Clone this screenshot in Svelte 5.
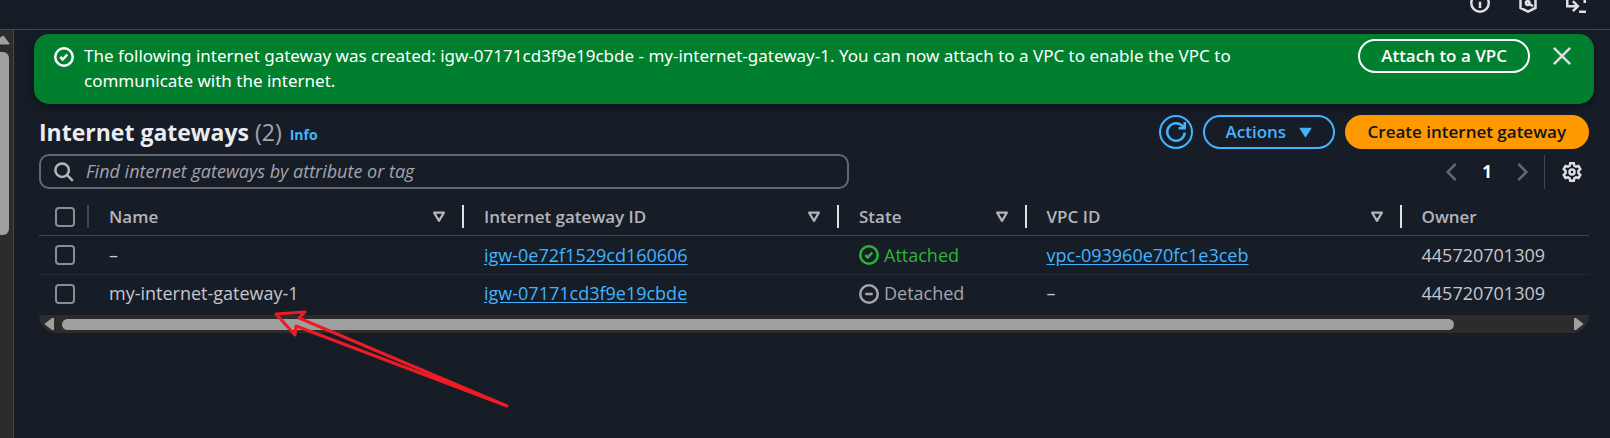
<script>
  const rows = [
    { name: '–', id: 'igw-0e72f1529cd160606', state: 'Attached', vpc: 'vpc-093960e70fc1e3ceb', owner: '445720701309' },
    { name: 'my-internet-gateway-1', id: 'igw-07171cd3f9e19cbde', state: 'Detached', vpc: '', owner: '445720701309' }
  ];
  const columns = [
    { label: 'Name', sortable: true },
    { label: 'Internet gateway ID', sortable: true },
    { label: 'State', sortable: true },
    { label: 'VPC ID', sortable: true },
    { label: 'Owner', sortable: false }
  ];
</script>

{#snippet checkCircle()}
  <svg class="icon" viewBox="0 0 16 16" aria-hidden="true">
    <circle cx="8" cy="8" r="7" />
    <path d="m5 8 2 2 3.6-4" />
  </svg>
{/snippet}

<div class="page">
  <header class="topbar">
    <button aria-label="Info panel">
      <svg class="icon" viewBox="0 0 16 16"><circle cx="8" cy="8" r="7" /><path d="M8 7v5M8 4v1.6" /></svg>
    </button>
    <button aria-label="Tools">
      <svg class="icon" viewBox="0 0 16 16"><path d="M8 1.100 14 4v8l-6 2.900L2 12V4zM8 8l4 2.600" /><circle cx="7.800" cy="8" r="1.500" /></svg>
    </button>
    <button aria-label="CloudShell">
      <svg class="icon" viewBox="0 0 16 16"><path d="M1 2v8.500h8M5.500 6.500l4 4-4 4M10.500 15H16M15 2v6" /></svg>
    </button>
  </header>

  <div class="body">
    <div class="vscroll" aria-hidden="true">
      <svg viewBox="0 0 10 10"><path d="M3.5.5 9.5 8.5a.9.9 0 0 1-.6 1H-1V3z" /></svg>
      <div class="vthumb"></div>
    </div>

    <main>
      <section class="alert">
        {@render checkCircle()}
        <p>The following internet gateway was created: igw-07171cd3f9e19cbde - my-internet-gateway-1. You can now attach to a VPC to enable the VPC to communicate with the internet.</p>
        <button class="btn attach">Attach to a VPC</button>
        <button class="close" aria-label="Dismiss">
          <svg class="icon" viewBox="0 0 16 16"><path d="m1.5 1.5 13 13m0-13-13 13" /></svg>
        </button>
      </section>

      <section class="panel">
        <div class="heading">
          <h1>Internet gateways <span>(2)</span></h1>
          <a class="info" href="#info">Info</a>
          <div class="actions">
            <button class="btn refresh" aria-label="Refresh">
              <svg class="icon" viewBox="0 0 16 16"><path d="M15 8.500A7 7 0 1 1 12.500 2.600L15 5M15 0v5h-5" /></svg>
            </button>
            <button class="btn">Actions <svg class="caret" viewBox="0 0 12 10" aria-hidden="true"><path d="M1 1h10L6 9z" /></svg></button>
            <button class="btn primary">Create internet gateway</button>
          </div>
        </div>

        <div class="tools">
          <label class="search">
            <svg class="icon" viewBox="0 0 16 16" aria-hidden="true"><circle cx="6.5" cy="6.5" r="5.4" /><path d="m10.5 10.5 4.6 4.6" /></svg>
            <input type="text" aria-label="Find internet gateways" placeholder="Find internet gateways by attribute or tag" />
          </label>
          <nav class="pager" aria-label="Pages">
            <button class="dim" aria-label="Previous page"><svg class="icon" viewBox="0 0 16 16"><path d="M11 1.5 4.5 8l6.500 6.500" /></svg></button>
            <button class="current">1</button>
            <button class="dim" aria-label="Next page"><svg class="icon" viewBox="0 0 16 16"><path d="M5 1.500 11.500 8 5 14.500" /></svg></button>
          </nav>
          <button class="settings" aria-label="Preferences">
            <svg class="icon" viewBox="0 0 16 16"><path d="M6.600 1h2.800l.5 2 1.300.800 2-.6 1.400 2.500L13.100 7.200v1.600l1.500 1.500-1.400 2.500-2-.6-1.300.8-.5 2H6.600l-.5-2-1.300-.8-2 .6-1.400-2.500 1.500-1.500V7.200L1.400 5.700l1.400-2.500 2 .6 1.300-.8z" /><circle cx="8" cy="8" r="2" /></svg>
          </button>
        </div>

        <table>
          <colgroup>
            <col class="c-check" /><col class="c-wide" /><col class="c-wide" /><col class="c-slim" /><col class="c-wide" /><col class="c-slim" />
          </colgroup>
          <thead>
            <tr>
              <th class="check"><input type="checkbox" aria-label="Select all" /></th>
              {#each columns as col}
                <th>
                  <div class="th">
                    {col.label}
                    {#if col.sortable}
                      <svg class="sort" viewBox="0 0 12 11" aria-hidden="true"><path d="M1.500 1.500h9L6 9z" /></svg>
                    {/if}
                  </div>
                </th>
              {/each}
            </tr>
          </thead>
          <tbody>
            {#each rows as row}
              <tr>
                <td class="check"><input type="checkbox" aria-label="Select {row.id}" /></td>
                <td>{row.name}</td>
                <td><a href="#{row.id}">{row.id}</a></td>
                <td>
                  <span class="state" class:ok={row.state === 'Attached'}>
                    {#if row.state === 'Attached'}
                      {@render checkCircle()}
                    {:else}
                      <svg class="icon" viewBox="0 0 16 16" aria-hidden="true"><circle cx="8" cy="8" r="7" /><path d="M5 8h6" /></svg>
                    {/if}
                    {row.state}
                  </span>
                </td>
                <td>{#if row.vpc}<a href="#{row.vpc}">{row.vpc}</a>{:else}–{/if}</td>
                <td>{row.owner}</td>
              </tr>
            {/each}
          </tbody>
        </table>

        <div class="hscroll" aria-hidden="true">
          <svg viewBox="0 0 10 12"><path d="M9 0v12H7L.6 7a1 1 0 0 1 0-2L7 0z" /></svg>
          <div class="track"><div class="hthumb"></div></div>
          <svg viewBox="0 0 10 12"><path d="M1 0v12h2l6.400-5a1 1 0 0 0 0-2L3 0z" /></svg>
        </div>
      </section>
    </main>
  </div>

  <svg class="arrow" viewBox="0 0 240 100" aria-hidden="true">
    <path d="M6 4 35 2l-6 6 208 88L26 16l-1 9z" />
  </svg>
</div>

<style>
  :global(body) {
    background: #161d26;
  }
  .page {
    position: relative;
    min-height: 100vh;
    display: flex;
    flex-direction: column;
    overflow: hidden;
    color: #c6c6cd;
    font: 18px/25px 'Open Sans', 'Noto Sans', sans-serif;
  }
  * {
    box-sizing: border-box;
  }
  button {
    font: inherit;
    color: inherit;
    background: none;
    border: 0;
    padding: 0;
    cursor: pointer;
  }
  a {
    color: #42b4ff;
    text-underline-offset: 2px;
  }
  .icon {
    display: block;
    flex: none;
    width: 20px;
    height: 20px;
    fill: none;
    stroke: currentColor;
    stroke-width: 2;
  }
  .topbar {
    display: flex;
    justify-content: flex-end;
    align-items: flex-end;
    gap: 28px;
    height: 30px;
    padding: 0 24px 16px 0;
    border-bottom: 1px solid #424650;
    color: #dedee3;
  }
  .body {
    flex: 1;
    display: flex;
  }
  .vscroll {
    width: 14px;
    flex: none;
    background: #2c2c2c;
    border-right: 1px solid #424650;
    padding-top: 5px;
  }
  .vscroll svg {
    display: block;
    width: 10px;
    height: 10px;
    fill: #9f9f9f;
  }
  .vthumb {
    width: 9px;
    height: 183px;
    margin-top: 7px;
    border-radius: 0 6px 6px 0;
    background: #9f9f9f;
  }
  main {
    flex: 1;
    min-width: 0;
    padding: 4px 16px 0 20px;
  }
  .alert {
    display: flex;
    align-items: flex-start;
    padding: 5px 22px 5px 20px;
    min-height: 70px;
    border-radius: 15px;
    background: #00802f;
    color: #fff;
    box-shadow: 0 3px 8px #0006;
  }
  .alert > .icon {
    margin: 8px 10px 0 0;
  }
  .alert p {
    flex: 1;
    margin: 4px 40px 0 0;
    font-family: 'Noto Sans', sans-serif;
    font-size: 17px;
  }
  .btn {
    height: 34px;
    padding: 0 21px;
    border: 2px solid #42b4ff;
    border-radius: 17px;
    color: #42b4ff;
    font-size: 17px;
    font-weight: 600;
    line-height: 26px;
    white-space: nowrap;
  }
  .btn.attach {
    color: #fff;
    border-color: #fff;
  }
  .close {
    margin: 7px 0 0 22px;
    color: #dedee3;
  }
  .panel {
    padding: 11px 5px 0;
  }
  .heading {
    display: flex;
    align-items: center;
  }
  h1 {
    margin: 0;
    font-size: 23px;
    line-height: 30px;
    color: #ebebf0;
  }
  h1 span {
    font-weight: 400;
    color: #a4a4ad;
  }
  .info {
    margin: 5px 0 0 8px;
    font-size: 14px;
    font-weight: 700;
    text-decoration: none;
  }
  .actions {
    display: flex;
    gap: 10px;
    margin-left: auto;
  }
  .btn.refresh {
    width: 34px;
    padding: 0 5px;
  }
  .caret {
    width: 13px;
    height: 11px;
    margin-left: 8px;
    fill: currentColor;
    stroke: currentColor;
    stroke-linejoin: round;
  }
  .btn.primary {
    background: #f90;
    border-color: #f90;
    color: #0f141a;
  }
  .tools {
    display: flex;
    align-items: center;
    margin-top: 5px;
  }
  .search {
    display: flex;
    align-items: center;
    gap: 12px;
    width: 810px;
    height: 35px;
    padding: 0 14px 0 13px;
    border: 2px solid #656871;
    border-radius: 10px;
    color: #b4b4bb;
  }
  .search input {
    flex: 1;
    min-width: 0;
    padding: 0;
    border: 0;
    outline: 0;
    background: none;
    color: inherit;
    font: inherit;
  }
  .search input::placeholder {
    color: #a4a4ad;
    font-style: italic;
    opacity: 1;
  }
  .pager {
    display: flex;
    align-items: center;
    gap: 20px;
    margin-left: auto;
    padding-right: 12px;
  }
  .pager .dim {
    color: #656871;
  }
  .pager .current {
    width: 10px;
    color: #fff;
    font-size: 17px;
    font-weight: 700;
  }
  .settings {
    height: 34px;
    padding: 0 7px 0 17px;
    border-left: 1px solid #424650;
    color: #dedee3;
  }
  table {
    width: 100%;
    margin-top: 9px;
    table-layout: fixed;
    border-collapse: separate;
    border-spacing: 0;
  }
  .c-check {
    width: 50px;
  }
  .c-wide {
    width: 25%;
  }
  .c-slim {
    width: 12.5%;
  }
  th,
  td {
    height: 39px;
    padding: 0 0 0 20px;
    text-align: left;
    white-space: nowrap;
    border-bottom: 1px solid #232b37;
  }
  th {
    height: 38px;
    border-bottom-color: #424650;
    color: #b4b4bb;
    font-size: 17px;
    font-weight: 600;
  }
  tr:last-child td {
    height: 40px;
    padding-bottom: 2px;
    border-bottom-color: transparent;
  }
  .th {
    display: flex;
    align-items: center;
    justify-content: space-between;
    height: 23px;
    padding-right: 16px;
    border-right: 2px solid #dedee3;
  }
  th:last-child .th {
    border: 0;
  }
  .sort {
    width: 14px;
    height: 12px;
    fill: none;
    stroke: currentColor;
    stroke-width: 2;
    stroke-linejoin: round;
  }
  .check {
    padding-left: 16px;
  }
  th.check {
    background: linear-gradient(#424650, #424650) right 0 center / 2px 23px no-repeat;
  }
  .check input {
    appearance: none;
    display: block;
    width: 20px;
    height: 20px;
    margin: 0;
    border: 2px solid #8c8c94;
    border-radius: 4px;
  }
  .state {
    display: flex;
    align-items: center;
    gap: 5px;
    color: #a4a4ad;
  }
  .state.ok {
    color: #2bb534;
  }
  .hscroll {
    display: flex;
    align-items: center;
    height: 18px;
    padding: 0 6px;
    border-radius: 0 0 18px 18px;
    background: #2c2c2c;
  }
  .hscroll svg {
    width: 10px;
    height: 12px;
    flex: none;
    fill: #9f9f9f;
  }
  .track {
    flex: 1;
    margin: 0 8px 0 7px;
  }
  .hthumb {
    width: 92.6%;
    height: 11px;
    border-radius: 6px;
    background: #9f9f9f;
  }
  .arrow {
    position: absolute;
    left: 270px;
    top: 310px;
    width: 240px;
    height: 100px;
    fill: none;
    stroke: #ed1c24;
    stroke-width: 3;
    stroke-linejoin: round;
    pointer-events: none;
  }
</style>
